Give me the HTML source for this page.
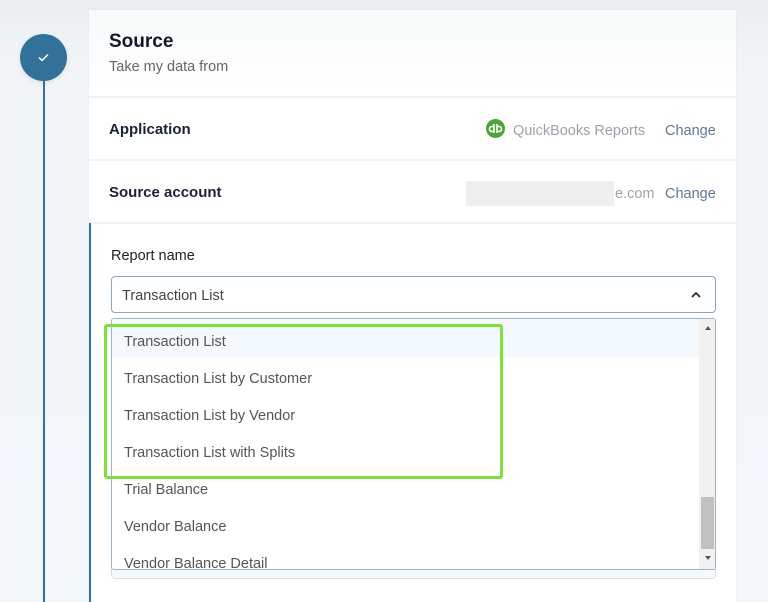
<!DOCTYPE html>
<html style="width:768px;height:602px;overflow:hidden"><head><style>
body{margin:0;width:768px;height:602px;overflow:hidden;background:linear-gradient(180deg,#e8edf0 0,#f1f5f8 60px,#f4f7fa 100%);font-family:"Liberation Sans",sans-serif;position:relative}
.circle{position:absolute;left:20px;top:34px;width:47px;height:47px;border-radius:50%;background:#32729a;box-shadow:0 2px 6px rgba(0,0,0,.08)}
.line{position:absolute;left:43px;top:80px;width:2px;height:522px;background:#32729a}
.card{position:absolute;left:89px;top:10px;width:647px;height:592px;background:#fff;border-radius:4px 4px 0 0;box-shadow:0 0 2px rgba(0,0,0,.06)}
.hdr{position:absolute;left:0;top:0;width:647px;height:86px;background:linear-gradient(180deg,#f7f9fa,#fff)}
.t{position:absolute;white-space:nowrap}
.div{position:absolute;left:0;width:647px;height:2px;background:#f0f3f5}
.chg{color:#5d7a96;font-size:14.5px}
.item{position:absolute;left:124px;font-size:14.5px;color:#555;white-space:nowrap}
</style></head><body>
<div class="circle"><svg width="47" height="47"><path d="M19 23.5l3 3 6-6" stroke="#fff" stroke-width="1.5" fill="none"/></svg></div>
<div class="line"></div>
<div class="card">
<div class="hdr"></div>
<div class="t" style="left:20px;top:21px;font-size:19px;font-weight:bold;color:#111a2b">Source</div>
<div class="t" style="left:20px;top:49px;font-size:14.5px;color:#666">Take my data from</div>
<div class="div" style="top:86px"></div>
<div class="t" style="left:20px;top:111px;font-size:15px;font-weight:bold;color:#1b2333">Application</div>
<svg style="position:absolute;left:397px;top:109px" width="19" height="19"><circle cx="9.5" cy="9.5" r="9.5" fill="#4ca43a"/><path d="M8 5v9M8 7.5h-2a2.5 2.5 0 0 0 0 5h2M11 5v9M11 7.5h2a2.5 2.5 0 0 1 0 5h-2" stroke="#fff" stroke-width="1.6" fill="none"/></svg>
<div class="t" style="left:424px;top:113px;font-size:14.5px;color:#9aa3ab">QuickBooks Reports</div>
<div class="t chg" style="left:576px;top:113px">Change</div>
<div class="div" style="top:149px"></div>
<div class="t" style="left:20px;top:174px;font-size:15px;font-weight:bold;color:#1b2333">Source account</div>
<div style="position:absolute;left:377px;top:171px;width:148px;height:25px;background:#efefef"></div>
<div class="t" style="left:526px;top:176px;font-size:14.5px;color:#9aa3ab">e.com</div>
<div class="t chg" style="left:576px;top:176px">Change</div>
<div class="div" style="top:212px"></div>
<div style="position:absolute;left:0;top:213px;width:2px;height:400px;background:#32729a"></div>
<div class="t" style="left:22px;top:238px;font-size:14.5px;color:#222">Report name</div>
</div>
<div style="position:absolute;left:111px;top:276px;width:603px;height:35px;border:1px solid #8aa7be;border-radius:4px;background:#fff"></div>
<div class="t" style="left:122px;top:288px;font-size:14.5px;color:#444">Transaction List</div>
<svg style="position:absolute;left:690px;top:291px" width="12" height="8"><path d="M2 6l4-4 4 4" stroke="#222" stroke-width="1.6" fill="none"/></svg>
<div style="position:absolute;left:111px;top:318px;width:603px;height:259px;border:1px solid #d7e3ec;border-radius:4px;background:#f5fafd"></div>
<div style="position:absolute;left:111px;top:318px;width:603px;height:250px;border:1px solid #9ab4c8;border-radius:3px;background:#fff;overflow:hidden">
<div style="position:absolute;left:0;top:0;width:588px;height:38px;background:#f3f9fc"></div>
<div style="position:absolute;right:0;top:0;width:16px;height:250px;background:#f1f1f1"></div>
<div style="position:absolute;right:1px;top:178px;width:13px;height:52px;background:#c1c1c1"></div>
<div style="position:absolute;right:4px;top:7px;border:3.5px solid transparent;border-bottom:4px solid #555;border-top:0"></div>
<div style="position:absolute;right:4px;top:237px;border:3.5px solid transparent;border-top:4px solid #555;border-bottom:0"></div>
</div>
<div class="item" style="top:334px">Transaction List</div>
<div class="item" style="top:371px">Transaction List by Customer</div>
<div class="item" style="top:408px">Transaction List by Vendor</div>
<div class="item" style="top:445px">Transaction List with Splits</div>
<div class="item" style="top:482px">Trial Balance</div>
<div class="item" style="top:519px">Vendor Balance</div>
<div class="item" style="top:556px;height:13px;overflow:hidden">Vendor Balance Detail</div>
<div style="position:absolute;left:104px;top:324px;width:393px;height:149px;border:3px solid #7ee03e;border-radius:3px"></div>
</body></html>
